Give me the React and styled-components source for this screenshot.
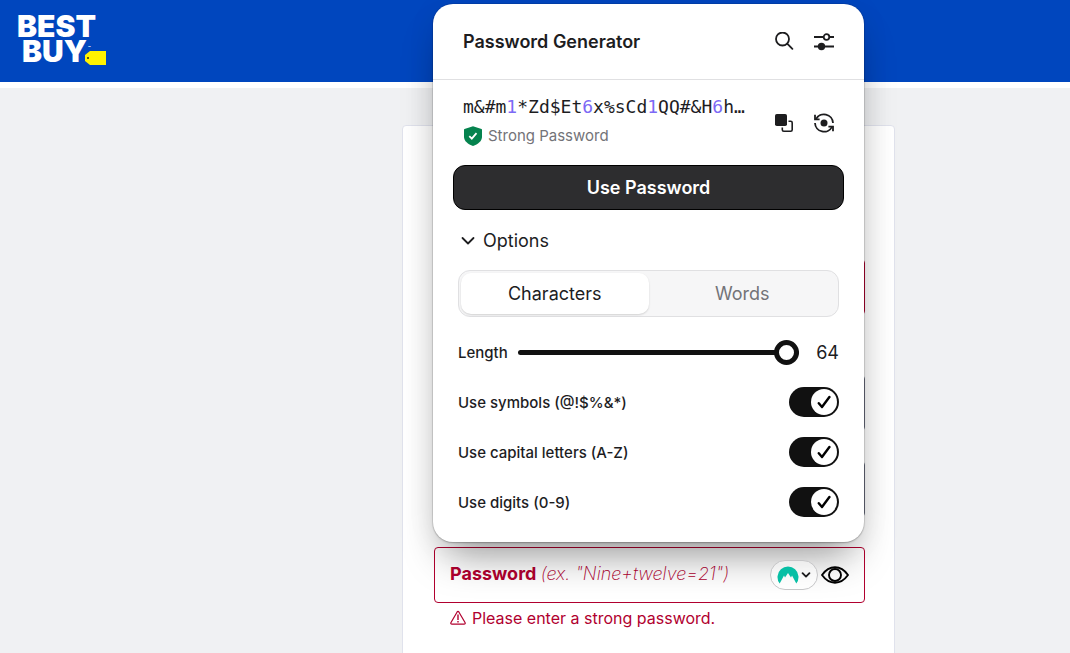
import React, { useState } from 'react';
import styled, { createGlobalStyle } from 'styled-components';

const color = {
  blue: '#0046be',
  red: '#b1002f',
  ink: '#1d1d1f',
  muted: '#737378',
  line: '#e0e0e2',
  black: '#111',
  digit: '#7c69f5',
};

const GlobalStyle = createGlobalStyle`
  * {
    box-sizing: border-box;
  }
  body {
    margin: 0;
    background: #f0f1f3;
    color: ${color.ink};
    font-family: Inter, 'Liberation Sans', sans-serif;
  }
  button,
  input {
    margin: 0;
    padding: 0;
    border: 0;
    background: none;
    color: inherit;
    font: inherit;
  }
  button {
    cursor: pointer;
  }
  svg {
    display: block;
    flex: none;
  }
`;

const Page = styled.div`
  height: 100vh;
  overflow: hidden;
`;

const Header = styled.header`
  display: flex;
  align-items: center;
  height: 88px;
  padding: 0 17px;
  background: ${color.blue};
  border-bottom: 6px solid #fff;
`;

const Main = styled.main`
  display: grid;
  grid-template-columns: 402fr minmax(0, 493px) 175fr;
  padding-top: 37px;
`;

const Card = styled.form`
  grid-column: 2;
  padding: 133px 29px 60px 31px;
  background: #fff;
  border: 1px solid #e0e2ec;
  border-radius: 4px;
`;

const Field = styled.input`
  display: block;
  width: 100%;
  height: 56px;
  margin-bottom: ${props => (props.$invalid ? 60 : 30)}px;
  padding: 0 16px;
  border: 1px solid ${props => (props.$invalid ? color.red : '#6a6f80')};
  border-radius: 4px;
`;

const PasswordWrap = styled.div`
  position: relative;
`;

const PasswordBox = styled.div`
  display: flex;
  align-items: center;
  height: 56px;
  padding: 0 15px;
  border: 1px solid ${color.red};
  border-radius: 4px;
`;

const PasswordLabel = styled.label`
  padding-bottom: 2px;
  color: ${color.red};
  font-size: 18px;
  line-height: 24px;
  font-weight: 700;
  white-space: nowrap;
  em {
    font-weight: 200;
  }
`;

const PasswordInput = styled.input`
  flex: 1;
  min-width: 0;
  height: 40px;
`;

const FieldTools = styled.div`
  position: relative;
  z-index: 2;
  display: flex;
  align-items: center;
  gap: 3px;
`;

const ManagerButton = styled.button`
  display: flex;
  align-items: center;
  justify-content: center;
  gap: 2px;
  width: 48px;
  height: 30px;
  background: rgba(255, 255, 255, 0.5);
  border: 1px solid #c6c6c8;
  border-radius: 15px;
`;

const ErrorText = styled.p`
  display: flex;
  align-items: center;
  gap: 6px;
  margin: 5px 0 0 16px;
  color: ${color.red};
  font-size: 16px;
  line-height: 20px;
`;

const Popover = styled.section`
  position: absolute;
  z-index: 1;
  left: -1px;
  right: 1px;
  bottom: calc(100% + 5px);
  padding-bottom: 15px;
  background: #fff;
  border-radius: 20px;
  box-shadow:
    0 0 0 1px rgba(0, 0, 0, 0.08),
    0 1px 2px rgba(0, 0, 0, 0.2),
    0 24px 40px -12px rgba(0, 0, 0, 0.4),
    0 4px 32px rgba(0, 0, 0, 0.05);
`;

const PopoverHead = styled.div`
  display: flex;
  align-items: center;
  height: 76px;
  padding: 0 20px 0 30px;
  border-bottom: 1px solid ${color.line};
`;

const Title = styled.h2`
  flex: 1;
  margin: 0;
  font-size: 18px;
  line-height: 24px;
  font-weight: 600;
`;

const IconButton = styled.button`
  display: grid;
  place-items: center;
  width: 40px;
  height: 40px;
`;

const Result = styled.div`
  display: flex;
  align-items: center;
  padding: 16px 20px 15px 30px;
`;

const ResultText = styled.div`
  flex: 1;
  min-width: 0;
`;

const Generated = styled.div`
  margin-bottom: 4px;
  font-family: 'DejaVu Sans Mono', monospace;
  font-size: 18px;
  line-height: 22px;
  white-space: nowrap;
`;

const Digit = styled.span`
  color: ${color.digit};
`;

const Strength = styled.div`
  display: flex;
  align-items: center;
  gap: 5px;
  color: ${color.muted};
  font-size: 15px;
  line-height: 28px;
`;

const UseButton = styled.button`
  display: block;
  width: calc(100% - 40px);
  height: 45px;
  margin: 0 20px;
  background: #2d2d2f;
  border: 1px solid #000;
  border-radius: 12px;
  color: #fff;
  font-size: 18px;
  font-weight: 600;
`;

const OptionsToggle = styled.button`
  display: flex;
  align-items: center;
  gap: 7px;
  margin: 18px 27px 16px;
  font-size: 18px;
  line-height: 26px;
`;

const Options = styled.div`
  padding: 0 25px;
`;

const Segments = styled.div`
  display: grid;
  grid-template-columns: 1fr 1fr;
  height: 47px;
  margin-bottom: 10px;
  padding: 2px;
  background: #f6f6f7;
  border: 1px solid ${color.line};
  border-radius: 12px;
`;

const Segment = styled.button`
  border-radius: 10px;
  background: ${props => (props.$active ? '#fff' : 'transparent')};
  box-shadow: ${props => (props.$active ? '0 1px 2px rgba(0, 0, 0, 0.15)' : 'none')};
  color: ${props => (props.$active ? color.ink : color.muted)};
  font-size: 18px;
`;

const Row = styled.div`
  display: flex;
  align-items: center;
  height: 50px;
  font-size: 15px;
  font-weight: 500;
`;

const Range = styled.input`
  flex: 1;
  min-width: 0;
  height: 25px;
  margin: 0 17px 0 10px;
  appearance: none;
  &::-webkit-slider-runnable-track {
    height: 5px;
    background: ${color.black};
    border-radius: 3px;
  }
  &::-webkit-slider-thumb {
    appearance: none;
    width: 25px;
    height: 25px;
    margin-top: -10px;
    background: #fff;
    border: 5px solid ${color.black};
    border-radius: 50%;
  }
`;

const Count = styled.output`
  font-size: 18px;
  font-weight: 400;
`;

const SwitchRow = styled(Row).attrs({ as: 'label' })`
  justify-content: space-between;
  cursor: pointer;
`;

const Switch = styled.span`
  position: relative;
  display: flex;
  justify-content: ${props => (props.$on ? 'flex-end' : 'flex-start')};
  width: 50px;
  height: 30px;
  padding: 2px;
  background: ${props => (props.$on ? color.black : '#bbb')};
  border-radius: 15px;
  input {
    position: absolute;
    inset: 0;
    width: 100%;
    height: 100%;
    opacity: 0;
  }
`;

const Knob = styled.span`
  display: grid;
  place-items: center;
  width: 26px;
  height: 26px;
  background: #fff;
  border-radius: 50%;
`;

function Logo() {
  return (
    <svg width="92" height="72" viewBox="0 -8 92 72">
      <text fill="#fff" fontFamily="Inter" fontWeight="900" fontSize="30">
        <tspan x="0" y="24">BEST</tspan>
        <tspan x="5" y="49">BUY</tspan>
        <tspan x="71" y="36" fontSize="4">™</tspan>
      </text>
      <path d="M73 38h16v14H73l-5-4v-6z" fill="#fff200" />
      <circle cx="71" cy="45" r="1" fill="#222" />
    </svg>
  );
}

function SearchIcon() {
  return (
    <svg width="20" height="20" viewBox="0 0 20 20" fill="none" stroke={color.ink} strokeWidth="1.8">
      <circle cx="8.5" cy="7" r="6.5" />
      <path d="M13.200 11.700l5.200 5.200" strokeLinecap="round" />
    </svg>
  );
}

function SlidersIcon() {
  return (
    <svg width="20" height="20" viewBox="0 0 20 20" fill="none" stroke={color.ink} strokeWidth="1.8">
      <path d="M0 5h9.500M15.500 5H20M0 14.500h20" />
      <circle cx="12.500" cy="5" r="2.800" />
      <circle cx="7.500" cy="14.500" r="2.800" fill={color.ink} />
    </svg>
  );
}

function CopyIcon() {
  return (
    <svg width="18" height="18" viewBox="0 0 18 18" fill="none" stroke={color.ink} strokeWidth="1.6">
      <rect x="0" y="0" width="12" height="12" rx="1.800" fill={color.ink} stroke="none" />
      <path d="M13.500 7.300h2.200a1.500 1.500 0 0 1 1.500 1.500v6.900a1.500 1.500 0 0 1-1.500 1.500H8.800a1.500 1.500 0 0 1-1.500-1.500v-2.200" />
    </svg>
  );
}

function RefreshIcon() {
  return (
    <svg width="20" height="20" viewBox="0 0 20 20" fill="none" stroke={color.ink} strokeWidth="1.8">
      <path d="M2 6.200A9 9 0 0 1 19 10M18 13.800A9 9 0 0 1 1 10" />
      <path d="M1 1.800v4.600h4.600M19 18.200v-4.600h-4.600" />
      <circle cx="10" cy="10" r="3.500" fill={color.ink} stroke="none" />
    </svg>
  );
}

function ShieldIcon() {
  return (
    <svg width="20" height="20" viewBox="0 0 20 20">
      <path d="M10 0.300l8.500 2.600q.5.2.5.8v7.100c0 4.400-4 7.500-9 9.200-5-1.700-9-4.800-9-9.200V3.700q0-.6.5-.8z" fill="#05834e" />
      <path d="M6.300 10.200l2.500 2.500 4.700-5.600" fill="none" stroke="#fff" strokeWidth="1.8" />
    </svg>
  );
}

function Chevron({ size, width }) {
  return (
    <svg width={size} height={size} viewBox="0 0 16 16" fill="none" stroke={color.ink} strokeWidth={width}>
      <path d="M2.500 5l5.500 5.500L13.500 5" strokeLinecap="round" strokeLinejoin="round" />
    </svg>
  );
}

function CheckIcon() {
  return (
    <svg width="14" height="14" viewBox="0 0 14 14" fill="none" stroke="#000" strokeWidth="2.4">
      <path d="M1.800 8.200l3.200 3.800L12.400 2" strokeLinecap="round" strokeLinejoin="round" />
    </svg>
  );
}

function MountainIcon() {
  return (
    <svg width="22" height="18" viewBox="0 0 22 18">
      <path
        d="M2.700 17.500A10.500 10.500 0 1 1 19.300 17.500L15 9.500l-1 2-3-4.500-3 4.500-1-2z"
        fill="#07bfa5"
      />
    </svg>
  );
}

function EyeIcon() {
  return (
    <svg width="28" height="18" viewBox="0 0 28 18" fill="none" stroke="#000" strokeWidth="1.9">
      <path d="M1 9Q6.500 1.300 14 1.300T27 9Q21.500 16.700 14 16.700T1 9z" strokeLinejoin="round" />
      <circle cx="14" cy="9" r="6" />
    </svg>
  );
}

function WarningIcon() {
  return (
    <svg width="16" height="16" viewBox="0 0 16 16" fill="none" stroke={color.red} strokeWidth="1.2">
      <path d="M7 2.200q1-1.500 2 0l6 10.300q.7 1.700-1 1.700H2q-1.700 0-1-1.700z" />
      <path d="M8 4.500v5.500M8 11v1.500" strokeWidth="1.4" />
    </svg>
  );
}

const password = 'm&#m1*Zd$Et6x%sCd1QQ#&H6h…';

const switches = [
  { id: 'symbols', label: 'Use symbols (@!$%&*)' },
  { id: 'capitals', label: 'Use capital letters (A-Z)' },
  { id: 'digits', label: 'Use digits (0-9)' },
];

function Generator() {
  const [mode, setMode] = useState('Characters');
  const [length, setLength] = useState(64);
  const [open, setOpen] = useState(true);
  const [enabled, setEnabled] = useState({ symbols: true, capitals: true, digits: true });

  return (
    <Popover aria-label="Password Generator">
      <PopoverHead>
        <Title>Password Generator</Title>
        <IconButton type="button" aria-label="Search"><SearchIcon /></IconButton>
        <IconButton type="button" aria-label="Settings"><SlidersIcon /></IconButton>
      </PopoverHead>
      <Result>
        <ResultText>
          <Generated>
            {password.split(/(\d)/).map((part, i) =>
              /\d/.test(part) ? <Digit key={i}>{part}</Digit> : part,
            )}
          </Generated>
          <Strength>
            <ShieldIcon />
            Strong Password
          </Strength>
        </ResultText>
        <IconButton type="button" aria-label="Copy"><CopyIcon /></IconButton>
        <IconButton type="button" aria-label="Regenerate"><RefreshIcon /></IconButton>
      </Result>
      <UseButton type="button">Use Password</UseButton>
      <OptionsToggle type="button" aria-expanded={open} onClick={() => setOpen(!open)}>
        <Chevron size={16} width={1.8} />
        Options
      </OptionsToggle>
      {open && (
        <Options>
          <Segments>
            {['Characters', 'Words'].map(name => (
              <Segment
                key={name}
                type="button"
                aria-pressed={mode === name}
                $active={mode === name}
                onClick={() => setMode(name)}
              >
                {name}
              </Segment>
            ))}
          </Segments>
          <Row>
            <label htmlFor="length">Length</label>
            <Range
              id="length"
              type="range"
              min="8"
              max="64"
              value={length}
              onChange={e => setLength(e.target.value)}
            />
            <Count htmlFor="length">{length}</Count>
          </Row>
          {switches.map(({ id, label }) => (
            <SwitchRow key={id}>
              {label}
              <Switch $on={enabled[id]}>
                <input
                  type="checkbox"
                  checked={enabled[id]}
                  onChange={() => setEnabled({ ...enabled, [id]: !enabled[id] })}
                />
                <Knob>{enabled[id] && <CheckIcon />}</Knob>
              </Switch>
            </SwitchRow>
          ))}
        </Options>
      )}
    </Popover>
  );
}

export default function App() {
  return (
    <Page>
      <GlobalStyle />
      <Header>
        <a href="#home" aria-label="Best Buy"><Logo /></a>
      </Header>
      <Main>
        <Card>
          <Field type="text" aria-label="First name" $invalid />
          <Field type="text" aria-label="Last name" />
          <Field type="email" aria-label="Email" />
          <PasswordWrap>
            <PasswordBox>
              <PasswordLabel htmlFor="password">
                Password <em>(ex. "Nine+twelve=21")</em>
              </PasswordLabel>
              <PasswordInput id="password" type="password" />
              <FieldTools>
                <ManagerButton type="button" aria-label="Password manager">
                  <MountainIcon />
                  <Chevron size={10} width={3} />
                </ManagerButton>
                <button type="button" aria-label="Show password"><EyeIcon /></button>
              </FieldTools>
            </PasswordBox>
            <Generator />
          </PasswordWrap>
          <ErrorText>
            <WarningIcon />
            Please enter a strong password.
          </ErrorText>
        </Card>
      </Main>
    </Page>
  );
}
